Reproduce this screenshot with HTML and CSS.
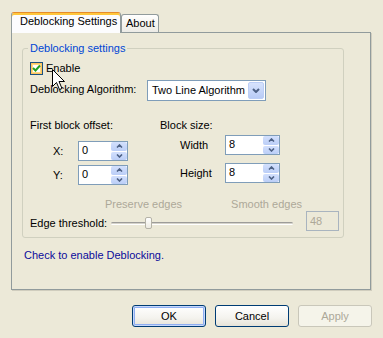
FILE: index.html
```html
<!DOCTYPE html>
<html lang="en">
<head>
    <meta charset="UTF-8">
    <title>Deblocking Settings</title>
    <link rel="stylesheet" href="styles.css">
</head>
<body>
    <div class="dialog">
        <!-- Tabs -->
        <div class="tabs">
            <div class="tab tab-active">Deblocking Settings</div>
            <div class="tab tab-idle">About</div>
        </div>

        <!-- Tab page -->
        <div class="page">
            <fieldset class="group">
                <legend>Deblocking settings</legend>

                <div class="row-enable">
                    <span class="checkbox">
                        <svg width="9" height="9" viewBox="0 0 9 9"><path d="M1 4 L3.5 6.5 L8 1.5" fill="none" stroke="#21A121" stroke-width="2"/></svg>
                    </span>
                    <span>Enable</span>
                </div>

                <div class="row-algo">
                    <span class="algo-label">Deblocking Algorithm:</span>
                    <div class="select">
                        <span class="select-text">Two Line Algorithm</span>
                        <span class="select-btn">
                            <svg width="8" height="5" viewBox="0 0 8 5"><path d="M1 1 L4 4 L7 1" fill="none" stroke="#4D6185" stroke-width="2"/></svg>
                        </span>
                    </div>
                </div>

                <div class="blocks">
                    <div class="col col-offset">
                        <div class="col-title">First block offset:</div>
                        <div class="field field-x">
                            <span class="field-label">X:</span>
                            <div class="spin-edit">
                                <span class="spin-value">0</span>
                                <span class="spin">
                                    <span class="spin-btn"><svg width="7" height="4" viewBox="0 0 7 4"><path d="M1 3.5 L3.5 1 L6 3.5" fill="none" stroke="#4D6185" stroke-width="1.6"/></svg></span>
                                    <span class="spin-btn"><svg width="7" height="4" viewBox="0 0 7 4"><path d="M1 0.5 L3.5 3 L6 0.5" fill="none" stroke="#4D6185" stroke-width="1.6"/></svg></span>
                                </span>
                            </div>
                        </div>
                        <div class="field field-y">
                            <span class="field-label">Y:</span>
                            <div class="spin-edit">
                                <span class="spin-value">0</span>
                                <span class="spin">
                                    <span class="spin-btn"><svg width="7" height="4" viewBox="0 0 7 4"><path d="M1 3.5 L3.5 1 L6 3.5" fill="none" stroke="#4D6185" stroke-width="1.6"/></svg></span>
                                    <span class="spin-btn"><svg width="7" height="4" viewBox="0 0 7 4"><path d="M1 0.5 L3.5 3 L6 0.5" fill="none" stroke="#4D6185" stroke-width="1.6"/></svg></span>
                                </span>
                            </div>
                        </div>
                    </div>

                    <div class="col col-size">
                        <div class="col-title">Block size:</div>
                        <div class="field field-w">
                            <span class="field-label">Width</span>
                            <div class="spin-edit spin-edit-wide">
                                <span class="spin-value">8</span>
                                <span class="spin">
                                    <span class="spin-btn"><svg width="7" height="4" viewBox="0 0 7 4"><path d="M1 3.5 L3.5 1 L6 3.5" fill="none" stroke="#4D6185" stroke-width="1.6"/></svg></span>
                                    <span class="spin-btn"><svg width="7" height="4" viewBox="0 0 7 4"><path d="M1 0.5 L3.5 3 L6 0.5" fill="none" stroke="#4D6185" stroke-width="1.6"/></svg></span>
                                </span>
                            </div>
                        </div>
                        <div class="field field-h">
                            <span class="field-label">Height</span>
                            <div class="spin-edit spin-edit-wide">
                                <span class="spin-value">8</span>
                                <span class="spin">
                                    <span class="spin-btn"><svg width="7" height="4" viewBox="0 0 7 4"><path d="M1 3.5 L3.5 1 L6 3.5" fill="none" stroke="#4D6185" stroke-width="1.6"/></svg></span>
                                    <span class="spin-btn"><svg width="7" height="4" viewBox="0 0 7 4"><path d="M1 0.5 L3.5 3 L6 0.5" fill="none" stroke="#4D6185" stroke-width="1.6"/></svg></span>
                                </span>
                            </div>
                        </div>
                    </div>
                </div>

                <div class="slider-labels">
                    <span class="preserve">Preserve edges</span>
                    <span class="smooth">Smooth edges</span>
                </div>

                <div class="row-slider">
                    <span class="slider-label">Edge threshold:</span>
                    <div class="slider">
                        <div class="track"></div>
                        <div class="thumb"></div>
                    </div>
                    <div class="value-box">48</div>
                </div>
            </fieldset>

            <p class="hint">Check to enable Deblocking.</p>
        </div>

        <!-- Dialog buttons -->
        <div class="buttons">
            <div class="btn btn-default">OK</div>
            <div class="btn">Cancel</div>
            <div class="btn btn-disabled">Apply</div>
        </div>
    </div>

    <!-- Mouse pointer -->
    <svg class="cursor" width="13" height="22" viewBox="0 0 13 22">
        <path d="M0.5 0.5 L0.5 17.5 L4.5 13.5 L7.5 20.5 L10 19.5 L7 12.5 L12.5 12.5 Z" fill="#fff" stroke="#000" stroke-width="1"/>
    </svg>
</body>
</html>
```

FILE: styles.css
```css
* {
    margin: 0;
    padding: 0;
    box-sizing: border-box;
}

body {
    font-family: 'Liberation Sans', Arial, sans-serif;
    font-size: 11px;
    line-height: 13px;
    color: #000;
    background: #ECE9D8;
    width: 383px;
    height: 338px;
    overflow: hidden;
    position: relative;
}

.dialog {
    padding: 12px 0 0 11px;
}

/* Tabs */
.tabs {
    display: flex;
    align-items: flex-start;
    height: 21px;
    margin-bottom: -1px;
    position: relative;
    z-index: 1;
}

.tab {
    border: 1px solid #919B9C;
    border-bottom: none;
    border-radius: 3px 3px 0 0;
}

.tab-active {
    width: 110px;
    height: 21px;
    padding: 2px 0 0 8px;
    background: #FCFCFE;
    border-top-color: #E68B2C;
    box-shadow: inset 0 2px 0 #FFC73C;
}

.tab-idle {
    width: 38px;
    height: 18px;
    margin-top: 2px;
    padding: 2px 0 0 4px;
    background: linear-gradient(#FFFFFF, #F3F2EC 60%, #ECEBE6);
}

/* Tab page */
.page {
    width: 360px;
    height: 258px;
    border: 1px solid #919B9C;
    box-shadow: 1px 1px 0 #D0CDBE;
    padding-top: 9px;
}

.group {
    margin-left: 10px;
    width: 322px;
    height: 196px;
    border: 1px solid #D0D0BF;
    border-radius: 3px;
    padding: 0 0 0 7px;
}

.group legend {
    color: #0046D5;
    padding: 0 2px;
    margin-left: -2px;
    line-height: 13px;
}

.row-enable {
    display: flex;
    align-items: center;
    gap: 3px;
    height: 13px;
    margin-top: 7px;
}

.checkbox {
    width: 13px;
    height: 13px;
    border: 1px solid #1C5180;
    background: #fff;
    box-shadow: inset 0 0 0 1px #FCC45C, inset 0 0 0 2px #FDD889;
    display: flex;
    align-items: center;
    justify-content: center;
}

.row-algo {
    display: flex;
    align-items: flex-start;
    margin-top: 5px;
    height: 21px;
}

.algo-label {
    width: 117px;
    margin-top: 3px;
}

.select {
    width: 119px;
    height: 21px;
    border: 1px solid #7F9DB9;
    background: #fff;
    padding: 1px;
    display: flex;
    align-items: center;
}

.select-text {
    flex: 1;
    padding-left: 3px;
}

.select-btn {
    width: 16px;
    height: 17px;
    border-radius: 2px;
    background: linear-gradient(#D7E3FD, #B8CBF6);
    border: 1px solid #BCCEF6;
    display: flex;
    align-items: center;
    justify-content: center;
}

/* Offset / size columns */
.blocks {
    display: flex;
    margin-top: 18px;
}

.col-offset {
    width: 130px;
}

.col-title {
    height: 13px;
}

.field {
    display: flex;
    align-items: center;
    height: 20px;
}

.field-x { margin-top: 9px; }
.field-y { margin-top: 4px; }
.field-w { margin-top: 3px; }
.field-h { margin-top: 8px; }

.col-offset .field-label {
    width: 48px;
    padding-left: 23px;
}

.col-size .field-label {
    width: 65px;
    padding-left: 20px;
}

.spin-edit {
    width: 50px;
    height: 20px;
    border: 1px solid #7F9DB9;
    background: #fff;
    display: flex;
}

.spin-edit-wide {
    width: 55px;
}

.spin-value {
    flex: 1;
    padding: 2px 0 0 3px;
}

.spin {
    width: 16px;
    display: flex;
    flex-direction: column;
    gap: 1px;
    background: #fff;
}

.spin-btn {
    flex: 1;
    border-radius: 2px;
    background: linear-gradient(#D3E0FD, #BBCEF7);
    display: flex;
    align-items: center;
    justify-content: center;
}

/* Slider */
.slider-labels {
    display: flex;
    width: 272px;
    height: 13px;
    margin-top: 13px;
    color: #ACA899;
}

.preserve {
    margin-left: 75px;
}

.smooth {
    margin-left: auto;
}

.row-slider {
    display: flex;
    align-items: flex-start;
    height: 20px;
}

.slider-label {
    width: 81px;
    margin-top: 6px;
}

.slider {
    position: relative;
    width: 182px;
    height: 20px;
}

.track {
    margin-top: 11px;
    height: 3px;
    border-radius: 2px;
    border-top: 1px solid #9D9C99;
    border-bottom: 1px solid #fff;
    background: #D5D3CA;
}

.thumb {
    position: absolute;
    left: 34px;
    top: 6px;
    width: 7px;
    height: 12px;
    border: 1px solid #B5B3A8;
    border-radius: 2px;
    background: linear-gradient(#FFFFFF, #EDEBE2);
}

.value-box {
    margin-left: 13px;
    width: 33px;
    height: 20px;
    border: 1px solid #A9B4BF;
    color: #ACA899;
    padding: 3px 0 0 3px;
}

.hint {
    margin: 11px 0 0 12px;
    color: #0B0B9B;
}

/* Dialog buttons */
.buttons {
    display: flex;
    gap: 9px;
    margin-top: 15px;
    padding-left: 121px;
}

.btn {
    width: 74px;
    height: 22px;
    border: 1px solid #003C74;
    border-radius: 3px;
    background: linear-gradient(#FFFFFF, #F4F3EE 60%, #E6E3D8);
    display: flex;
    align-items: center;
    justify-content: center;
}

.btn-default {
    box-shadow: inset 0 0 0 1px #C6D8FC, inset 0 0 0 2px #8FAEF1;
}

.btn-disabled {
    border-color: #C9C7BA;
    background: #F5F4EA;
    color: #ACA899;
}

.cursor {
    position: absolute;
    left: 52px;
    top: 69px;
}
```
